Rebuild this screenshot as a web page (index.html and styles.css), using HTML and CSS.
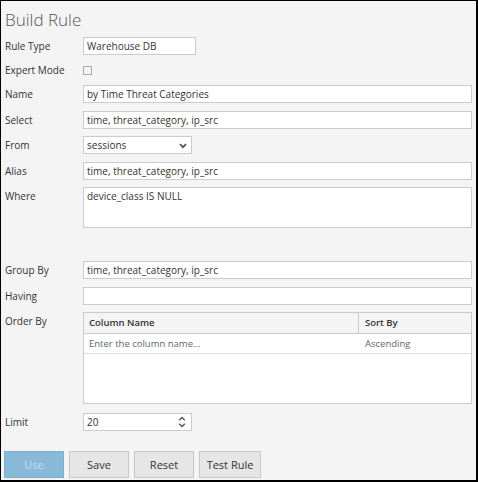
FILE: index.html
```html
<!DOCTYPE html>
<html>
<head>
<meta charset="utf-8">
<link rel="stylesheet" href="styles.css">
</head>
<body>
<div class="panel">
  <h1 class="title">Build Rule</h1>
  <div class="form">
    <div class="row">
      <label class="lbl">Rule Type</label>
      <input class="field short" type="text" value="Warehouse DB">
    </div>
    <div class="row row-check">
      <label class="lbl">Expert Mode</label>
      <span class="checkbox"></span>
    </div>
    <div class="row">
      <label class="lbl">Name</label>
      <input class="field" type="text" value="by Time Threat Categories">
    </div>
    <div class="row">
      <label class="lbl">Select</label>
      <input class="field" type="text" value="time, threat_category, ip_src">
    </div>
    <div class="row">
      <label class="lbl">From</label>
      <div class="select-wrap">
        <span class="select-text">sessions</span>
        <svg class="chev" width="8" height="6" viewBox="0 0 8 6"><path d="M1 1.2 L4 4.2 L7 1.2" fill="none" stroke="#555" stroke-width="1.8"/></svg>
      </div>
    </div>
    <div class="row">
      <label class="lbl">Alias</label>
      <input class="field" type="text" value="time, threat_category, ip_src">
    </div>
    <div class="row">
      <label class="lbl">Where</label>
      <textarea class="field area">device_class IS NULL</textarea>
    </div>
    <div class="row spacer"></div>
    <div class="row">
      <label class="lbl">Group By</label>
      <input class="field" type="text" value="time, threat_category, ip_src">
    </div>
    <div class="row">
      <label class="lbl">Having</label>
      <input class="field" type="text" value="">
    </div>
    <div class="row">
      <label class="lbl">Order By</label>
      <div class="table">
        <div class="thead">
          <div class="th th-name">Column Name</div>
          <div class="th th-sort">Sort By</div>
        </div>
        <div class="trow">
          <div class="td td-name">Enter the column name...</div>
          <div class="td td-sort">Ascending</div>
        </div>
      </div>
    </div>
    <div class="row row-limit">
      <label class="lbl">Limit</label>
      <div class="spin-wrap">
        <span class="select-text">20</span>
        <svg class="spin" width="8" height="12" viewBox="0 0 8 12"><path d="M1.2 4.2 L4 1.4 L6.8 4.2 M1.2 7.8 L4 10.6 L6.8 7.8" fill="none" stroke="#555" stroke-width="1.4"/></svg>
      </div>
    </div>
  </div>
  <div class="buttons">
    <button class="btn btn-primary">Use</button>
    <button class="btn">Save</button>
    <button class="btn">Reset</button>
    <button class="btn">Test Rule</button>
  </div>
</div>
</body>
</html>
```

FILE: styles.css
```css
html, body {
  margin: 0;
  padding: 0;
}
body {
  font-family: "Open Sans", "Liberation Sans", sans-serif;
  background: #f4f4f4;
}
.panel {
  box-sizing: border-box;
  width: 478px;
  height: 482px;
  border: 1px solid #000;
  border-right-width: 2px;
  border-bottom-width: 2px;
  background: #f4f4f4;
  padding: 0 4px 0 4px;
}
.title {
  margin: 0 0 2px 0;
  padding-top: 4px;
  height: 30px;
  line-height: 30px;
  font-size: 17px;
  font-weight: 300;
  color: #555;
}
.form {
  display: flex;
  flex-direction: column;
  gap: 7.5px;
}
.row {
  display: flex;
  align-items: flex-start;
}
.row-check {
  height: 15px;
  align-items: center;
}
.spacer {
  height: 18px;
}
.row-limit {
  margin-top: 1.5px;
}
.lbl {
  width: 78px;
  flex: none;
  font-size: 10px;
  line-height: 18px;
  color: #333;
}
.row-check .lbl {
  line-height: 15px;
}
.field {
  box-sizing: border-box;
  flex: 1;
  height: 18px;
  margin: 0;
  border: 1px solid #ccc;
  background: #fff;
  padding: 0 3px;
  font-family: inherit;
  font-size: 10px;
  color: #333;
  outline: none;
  min-width: 0;
}
.field.short {
  flex: none;
  width: 113px;
}
.area {
  height: 41px;
  resize: none;
  padding: 2px 3px;
  line-height: 13px;
}
.checkbox {
  box-sizing: border-box;
  width: 9px;
  height: 9px;
  border: 1px solid #a9a9a9;
  background: #f4f4f4;
}
.select-wrap, .spin-wrap {
  position: relative;
  box-sizing: border-box;
  width: 109px;
  height: 18px;
  border: 1px solid #ccc;
  background: #fff;
  padding: 0 3px;
  font-size: 10px;
  line-height: 16px;
  color: #333;
}
.chev {
  position: absolute;
  right: 4px;
  top: 6px;
}
.spin {
  position: absolute;
  right: 5px;
  top: 2px;
}
.table {
  flex: 1;
  box-sizing: border-box;
  height: 92px;
  border: 1px solid #ccc;
  background: #fff;
}
.thead {
  display: flex;
  height: 20px;
  background: #f4f4f4;
  border-bottom: 1px solid #ccc;
}
.trow {
  display: flex;
  height: 19px;
  border-bottom: 1px solid #ddd;
}
.th, .td {
  font-size: 9.5px;
  line-height: 20px;
  padding-left: 5px;
  color: #333;
}
.th {
  font-weight: 600;
}
.td {
  line-height: 19px;
  color: #666;
}
.th-name {
  width: 269px;
  border-right: 1px solid #ccc;
}
.td-name {
  width: 270px;
}
.th-sort, .td-sort {
  flex: 1;
  padding-left: 6px;
}
.buttons {
  display: flex;
  gap: 5px;
  margin-top: 20px;
  margin-left: -1px;
}
.btn {
  box-sizing: border-box;
  width: 60px;
  height: 27px;
  margin: 0;
  padding: 0;
  border: 1px solid #c8c8c8;
  background: #e6e6e6;
  font-family: inherit;
  font-size: 11px;
  color: #333;
}
.btn:nth-child(4) {
  width: 62px;
}
.btn-primary {
  background: #88b9d8;
  border-color: #7eb0d0;
  color: #c2dcee;
}
```
